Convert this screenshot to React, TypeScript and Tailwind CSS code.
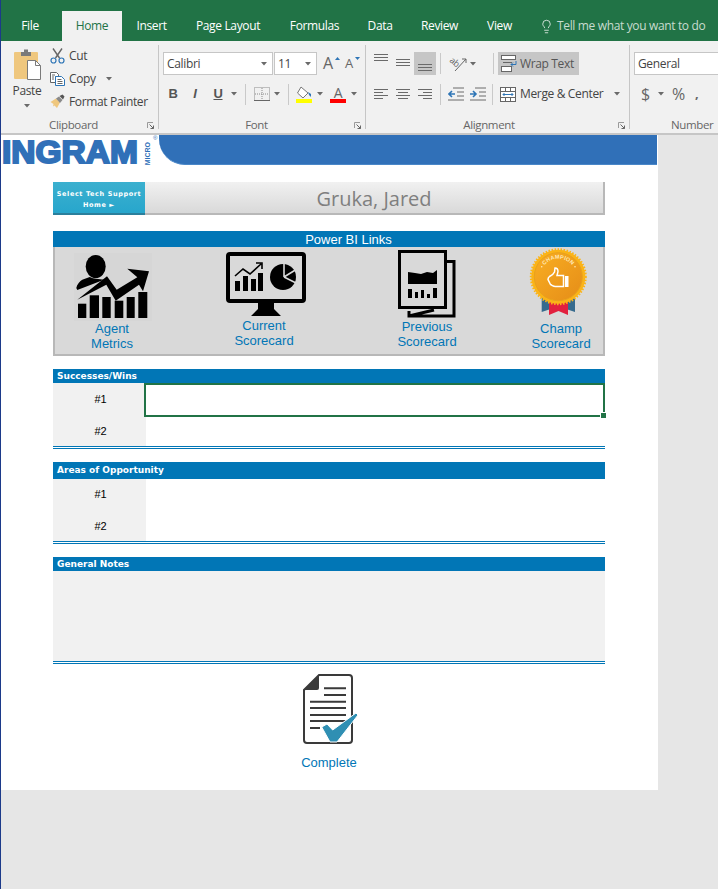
import React from "react";
import { Lightbulb } from "lucide-react";

const ui = "font-['Open_Sans',sans-serif] tracking-[-0.35px]";
const arial = "font-['Liberation_Sans',Arial,sans-serif]";

const Caret = ({ className = "" }: { className?: string }) => (
  <svg width="6" height="4" viewBox="0 0 6 4" className={`shrink-0 ${className}`}>
    <path d="M0 0h6L3 3.5z" fill="#6a6a6a" />
  </svg>
);

const Launcher = () => (
  <svg width="7" height="7" viewBox="0 0 7 7" className="shrink-0">
    <path d="M0.5 6V0.5H6" fill="none" stroke="#9a9a9a" />
    <path d="M2.5 2.5L6.5 6.5M6.5 3.5V6.5H3.5" fill="none" stroke="#666" />
  </svg>
);

const Sep = ({ className = "" }: { className?: string }) => (
  <div className={`w-px h-[21px] bg-[#c9c9c9] shrink-0 ${className}`} />
);

// horizontal lines used by the alignment buttons
const Lines = ({ rows, color = "#6a6a6a" }: { rows: number[][]; color?: string }) => (
  <svg width="14" height="22" viewBox="0 0 14 22">
    {rows.map((r, i) => (
      <rect key={i} x={r[0]} y={r[2]} width={r[1] - r[0]} height="1" fill={color} />
    ))}
  </svg>
);

const Group = ({
  label,
  width,
  children,
  labelClass = "",
}: {
  label: string;
  width: string;
  children: React.ReactNode;
  labelClass?: string;
}) => (
  <div className={`${width} h-[84px] mt-1 flex flex-col border-r border-[#c6c6c6] shrink-0`}>
    <div className="h-[75px]">{children}</div>
    <div className="h-[9px] flex items-center">
      <div className={`flex-1 text-center text-[11.5px] leading-3 text-[#666] ${labelClass}`}>{label}</div>
      <div className="mr-1 mt-px">
        <Launcher />
      </div>
    </div>
  </div>
);

const tabs = [
  { t: "File", w: "w-[50px] ml-[5px]" },
  { t: "Home", w: "w-[60px] ml-[7px]" },
  { t: "Insert", w: "w-[59px]" },
  { t: "Page Layout", w: "w-[94px]" },
  { t: "Formulas", w: "w-[79px]" },
  { t: "Data", w: "w-[52px]" },
  { t: "Review", w: "w-[67px]" },
  { t: "View", w: "w-[53px]" },
];

const TitleBar = () => (
  <div className={`h-[41px] bg-[#217346] pt-[11px] flex text-[12px] ${ui}`}>
    {tabs.map((x) => (
      <div
        key={x.t}
        className={`${x.w} h-[30px] leading-[30px] text-center ${
          x.t === "Home" ? "bg-[#f1f1f1] text-[#217346]" : "text-white"
        }`}
      >
        {x.t}
      </div>
    ))}
    <div className="ml-[13px] flex items-center h-[30px] text-[#c8dccf]">
      <Lightbulb size={15} strokeWidth={1.2} className="text-white" />
      <span className="ml-[3px] whitespace-nowrap">Tell me what you want to do</span>
    </div>
  </div>
);

const Clipboard = () => (
  <Group label="Clipboard" width="w-[159px]">
    <div className="flex">
      <div className="ml-[12px] w-[30px] flex flex-col items-center pt-1">
        <svg width="30" height="32" viewBox="0 0 30 32">
          <rect x="2" y="3" width="24" height="27" rx="1" fill="#efc77e" />
          <path d="M9 3h3V0.5h4V3h3v4H9z" fill="#7a7a7a" />
          <path d="M15.5 11.5h8l5 5v14h-13z" fill="#fff" stroke="#7a7a7a" />
          <path d="M23.5 11.5v5h5" fill="none" stroke="#7a7a7a" />
        </svg>
        <div className="mt-[2px] text-[12px] leading-[16px] text-[#444]">Paste</div>
        <Caret className="mt-[5px]" />
      </div>
      <div className="ml-[8px] -mt-px flex flex-col text-[12px] text-[#444]">
        <div className="h-[23px] flex items-center">
          <svg width="15" height="16" viewBox="0 0 15 16">
            <path d="M3 0.5L9.5 10M12 0.5L5.5 10" stroke="#666" strokeWidth="1.4" fill="none" />
            <circle cx="3.5" cy="12.5" r="2.5" fill="none" stroke="#2e75b6" strokeWidth="1.2" />
            <circle cx="11.5" cy="12.5" r="2.5" fill="none" stroke="#2e75b6" strokeWidth="1.2" />
          </svg>
          <span className="ml-[4px]">Cut</span>
        </div>
        <div className="h-[23px] flex items-center">
          <svg width="15" height="14" viewBox="0 0 15 14">
            <path d="M0.5 0.5h6l2 2v2H5.5v6h-5z" fill="#fff" stroke="#666" />
            <path d="M5.5 4.5h6l3 3v6h-9z" fill="#fff" stroke="#2e75b6" />
            <path d="M7.5 7.5h4M7.5 9.5h5M7.5 11.5h5M2 3h3M2 5h2M2 7h2" stroke="#666" />
          </svg>
          <span className="ml-[4px]">Copy</span>
          <Caret className="ml-[10px]" />
        </div>
        <div className="h-[23px] flex items-center">
          <svg width="15" height="15" viewBox="0 0 15 15">
            <path d="M0.5 8L6 4.5l4 4L7 14 4.5 11.5 3 12.5 3.5 10z" fill="#efc77e" />
            <path d="M6 4.5l3-2 3.5 3.5-2.5 3z" fill="#8a8a8a" />
            <path d="M9.5 2l3-1.5 2 2-1.5 3z" fill="#555" />
          </svg>
          <span className="ml-[4px] whitespace-nowrap">Format Painter</span>
        </div>
      </div>
    </div>
  </Group>
);

const FontGroup = () => (
  <Group label="Font" width="w-[207px]">
    <div className="pt-[7px] pl-1">
      <div className="flex items-center h-[23px]">
        <div className="w-[110px] h-[23px] bg-white border border-[#c6c6c6] flex items-center justify-between pl-[3px] pr-[5px] text-[12px] text-[#444]">
          Calibri
          <Caret />
        </div>
        <div className="ml-px w-[43px] h-[23px] bg-white border border-[#c6c6c6] flex items-center justify-between pl-[3px] pr-[5px] text-[12px] text-[#444]">
          11
          <Caret />
        </div>
        <div className="ml-[6px] w-[12px] text-[16px] leading-[23px] text-[#666]">A</div>
        <svg width="5" height="3" viewBox="0 0 5 3" className="-mt-[10px]">
          <path d="M0 3L2.5 0 5 3z" fill="#2e75b6" />
        </svg>
        <div className="ml-[5px] w-[10px] text-[13px] leading-[23px] text-[#666]">A</div>
        <svg width="5" height="3" viewBox="0 0 5 3" className="-mt-[10px]">
          <path d="M0 0h5L2.5 3z" fill="#2e75b6" />
        </svg>
      </div>
      <div className="mt-2 flex items-center h-[22px] text-[#555]">
        <div className={`w-5 text-center text-[13px] font-bold ${arial}`}>B</div>
        <div className={`ml-[2px] w-5 text-center text-[13px] italic font-bold ${arial}`}>I</div>
        <div className={`ml-[3px] w-5 text-center text-[13px] font-bold underline ${arial}`}>U</div>
        <Caret className="ml-[3px]" />
        <Sep className="ml-[8px]" />
        <svg width="16" height="14" viewBox="0 0 16 14" className="ml-[8px]">
          <rect x="0.5" y="0.5" width="15" height="13" fill="none" stroke="#8a8a8a" strokeDasharray="1 1" />
          <path d="M8 1v12M1 7h14" stroke="#8a8a8a" strokeDasharray="1 1" />
          <path d="M0 13.5h16" stroke="#666" />
        </svg>
        <Caret className="ml-[4px]" />
        <Sep className="ml-[8px]" />
        <svg width="16" height="17" viewBox="0 0 16 17" className="ml-[7px]">
          <path d="M5 1L12 7 7 12 1.5 7z" fill="#fff" stroke="#777" />
          <path d="M12 6l3 2v3l-2-2z" fill="#2e75b6" />
          <rect x="0" y="13" width="16" height="4" fill="#ffff00" />
        </svg>
        <Caret className="ml-[5px]" />
        <div className="ml-[7px] w-4 flex flex-col items-center">
          <span className="text-[14px] leading-[13px] text-[#666]">A</span>
          <div className="w-4 h-[4px] bg-[#ff0000]" />
        </div>
        <Caret className="ml-[5px]" />
      </div>
    </div>
  </Group>
);

const Alignment = () => (
  <Group label="Alignment" width="w-[264px]" labelClass="pr-[6px]">
    <div className="pt-[7px] pl-1">
      <div className="flex items-center h-[23px]">
        <div className="w-[22px] h-[23px] flex justify-center">
          <Lines rows={[[0, 14, 2], [0, 14, 5], [0, 14, 8]]} />
        </div>
        <div className="w-[22px] h-[23px] flex justify-center">
          <Lines rows={[[0, 14, 7], [0, 14, 10], [0, 14, 13]]} />
        </div>
        <div className="w-[22px] h-[23px] flex justify-center bg-[#c6c6c6]">
          <Lines rows={[[0, 14, 12], [0, 14, 15], [0, 14, 18]]} />
        </div>
        <Sep className="ml-[4px]" />
        <svg width="20" height="18" viewBox="0 0 20 18" className="ml-[7px]">
          <text x="1" y="10" fontSize="9" fill="#666" fontFamily="Open Sans" transform="rotate(40 6 8)">
            ab
          </text>
          <path d="M7 16L18 4M18 4h-4M18 4v4" stroke="#666" fill="none" />
        </svg>
        <Caret className="ml-[2px]" />
        <Sep className="ml-[17px]" />
        <div className="ml-[4px] w-[81px] h-[23px] bg-[#c6c6c6] flex items-center pl-[3px] text-[12px] text-[#555]">
          <svg width="16" height="17" viewBox="0 0 16 17" className="shrink-0">
            <rect x="0.5" y="0.5" width="14" height="4" fill="#fff" stroke="#666" />
            <rect x="0.5" y="11.5" width="10" height="5" fill="#fff" stroke="#666" />
            <path d="M2 7.5h9" stroke="#666" />
            <path d="M15 6v3.5H10M12 7.5l-2 2 2 2" stroke="#2e75b6" fill="none" />
          </svg>
          <span className="ml-[3px] whitespace-nowrap">Wrap Text</span>
        </div>
      </div>
      <div className="mt-2 flex items-center h-[22px]">
        <div className="w-[22px] flex justify-center">
          <Lines rows={[[0, 14, 6], [0, 9, 9], [0, 14, 12], [0, 9, 15]]} />
        </div>
        <div className="w-[22px] flex justify-center">
          <Lines rows={[[0, 14, 6], [2, 12, 9], [0, 14, 12], [2, 12, 15]]} />
        </div>
        <div className="w-[22px] flex justify-center">
          <Lines rows={[[0, 14, 6], [5, 14, 9], [0, 14, 12], [5, 14, 15]]} />
        </div>
        <Sep className="ml-[4px]" />
        <svg width="16" height="14" viewBox="0 0 16 14" className="ml-[7px]">
          <path d="M5 1h11M9 5h7M9 9h7M0 13h16" stroke="#6a6a6a" />
          <path d="M7 7H1M4 4L1 7l3 3" stroke="#2e75b6" strokeWidth="1.6" fill="none" />
        </svg>
        <svg width="16" height="14" viewBox="0 0 16 14" className="ml-[6px]">
          <path d="M5 1h11M9 5h7M9 9h7M0 13h16" stroke="#6a6a6a" />
          <path d="M0 7h6M3 4l3 3-3 3" stroke="#2e75b6" strokeWidth="1.6" fill="none" />
        </svg>
        <Sep className="ml-[6px]" />
        <svg width="16" height="15" viewBox="0 0 16 15" className="ml-[7px] shrink-0">
          <rect x="0.5" y="0.5" width="15" height="14" fill="#fff" stroke="#666" />
          <path d="M0 4.5h16M0 10.5h16M5.5 0v4M10.5 0v4M5.5 11v4M10.5 11v4" stroke="#666" />
          <path d="M3 7.5h10M4.5 6L3 7.5 4.5 9M11.5 6L13 7.5 11.5 9" stroke="#2e75b6" fill="none" />
        </svg>
        <span className="ml-[4px] w-[94px] whitespace-nowrap text-[12px] text-[#444]">Merge &amp; Center</span>
        <Caret />
      </div>
    </div>
  </Group>
);

const NumberGroup = () => (
  <div className="flex-1 h-[84px] mt-1 flex flex-col">
    <div className="h-[75px] pt-[7px] pl-1">
      <div className="w-[84px] h-[23px] bg-white border border-r-0 border-[#c6c6c6] pl-[3px] text-[12px] leading-[21px] text-[#444]">
        General
      </div>
      <div className="mt-2 flex items-center h-[22px] text-[#666]">
        <span className="ml-[7px] w-[10px] text-[16px]">$</span>
        <Caret className="ml-[7px]" />
        <span className="ml-[8px] text-[16px]">%</span>
        <span className="ml-[10px] text-[13px] font-bold">,</span>
      </div>
    </div>
    <div className="h-[9px] flex items-center text-[11.5px] leading-3 text-[#666] pl-[41px]">Number</div>
  </div>
);

const Ribbon = () => (
  <div className={`h-[94px] bg-[#f1f1f1] border-b-2 border-[#c6c6c6] flex ${ui}`}>
    <Clipboard />
    <FontGroup />
    <Alignment />
    <NumberGroup />
  </div>
);

const Logo = () => (
  <div className="h-[30px] flex">
    <div className={`w-[159px] h-[30px] flex items-end shrink-0 text-[#3070b8] ${arial}`}>
      <div className="w-[144px] pl-[2px]">
        <div className="origin-left scale-x-[1.08] text-[31px] leading-[24px] font-bold [-webkit-text-stroke:2px_#3070b8]">
          INGRAM
        </div>
      </div>
      <div className="[writing-mode:vertical-rl] rotate-180 text-[7px] leading-[7px] font-bold">MICRO</div>
      <div className="ml-[2px] self-start text-[6px] leading-[6px]">®</div>
    </div>
    <div className="w-[498px] h-[30px] bg-[#3070b8] rounded-bl-[26px] border-b border-[#4a87c8]" />
  </div>
);

const AgentIcon = () => (
  <svg width="78" height="68" viewBox="0 0 78 68" className="ml-[2px] bg-[#d6d6d6]">
    <ellipse cx="21.7" cy="13.5" rx="10" ry="11.5" />
    <path d="M2.3 35C3 31 6 28 8.3 26.7L15.7 24c4 2 9 2 14.3 2.7L3.3 37z" />
    <path d="M3.3 46.7L33 23.3l9.7 13.4 20.6-12.4-10-8.6L75 18.3 69 38.3l-4-6.6-23.3 16-9.4-16z" />
    <rect x="4" y="50.7" width="8.3" height="14.3" />
    <rect x="15.7" y="42.3" width="9.3" height="22.7" />
    <rect x="28.3" y="44" width="8.4" height="21" />
    <rect x="40.7" y="47.7" width="8.6" height="17.3" />
    <rect x="52.7" y="44" width="8" height="21" />
    <rect x="64.3" y="39" width="9" height="26" />
  </svg>
);

const MonitorIcon = () => (
  <svg width="80" height="66" viewBox="0 0 80 66" className="ml-[4px]">
    <rect x="2" y="2" width="76" height="47" rx="2" fill="none" stroke="#000" strokeWidth="4" />
    <path d="M32 51h16v6l7 7H25l7-7z" />
    <path d="M9 24l8-7 7 5 11-10M30 11h6v6" fill="none" stroke="#000" strokeWidth="1.6" />
    <rect x="9" y="29" width="5" height="10" />
    <rect x="17" y="24" width="5" height="15" />
    <rect x="25" y="27" width="5" height="12" />
    <rect x="32" y="21" width="5" height="18" />
    <circle cx="57" cy="25" r="13" />
    <path d="M58 25V11M58 25l13-8M58 25l12 6" stroke="#d9d9d9" strokeWidth="1.6" />
  </svg>
);

const PreviousIcon = () => (
  <svg width="59" height="68" viewBox="0 0 59 68">
    <rect x="1.5" y="1.5" width="46" height="56" fill="none" stroke="#000" strokeWidth="3" />
    <path d="M48 11.5h8V66H11v-5M11 66l25-6" fill="none" stroke="#000" strokeWidth="3" />
    <path d="M10 22l7 1 6 1 6-2 6 1 4-3v14H10z" />
    <rect x="10" y="39" width="4" height="9" />
    <rect x="17" y="42" width="3" height="6" />
    <rect x="23" y="40" width="3" height="8" />
    <rect x="29" y="44" width="3" height="4" />
    <rect x="35" y="38" width="4" height="10" />
  </svg>
);

const BadgeIcon = () => (
  <svg width="60" height="70" viewBox="0 0 60 70" className="-ml-[6px]">
    <defs>
      <linearGradient id="badge-inner" x1="0" y1="0" x2="1" y2="1">
        <stop offset="0" stopColor="#f9ae22" />
        <stop offset="1" stopColor="#e58d18" />
      </linearGradient>
    </defs>
    <path d="M13.7 50v15l9-3V50z" fill="#376b8e" />
    <path d="M47 50v15l-9-3V50z" fill="#376b8e" />
    <path d="M21 52v16l9.5-4 9.5 4V52z" fill="#e2213f" />
    <circle cx="30.3" cy="29.7" r="27" fill="#fbb418" stroke="#fbb418" strokeWidth="3" strokeDasharray="1.5 1.5" />
    <circle cx="30.3" cy="29.7" r="24" fill="url(#badge-inner)" stroke="#e8a11e" />
    <path id="badge-arc" d="M12.3 29.7a18 18 0 0 1 36 0" fill="none" />
    <text fontSize="5.5" fontWeight="700" fill="#ffe9b8" fontFamily="Liberation Sans" letterSpacing="0.2" textAnchor="middle">
      <textPath href="#badge-arc" startOffset="50%">
        CHAMPION
      </textPath>
    </text>
    <circle cx="13.7" cy="19.7" r="0.8" fill="#ffe9b8" />
    <circle cx="47" cy="19.7" r="0.8" fill="#ffe9b8" />
    <path
      d="M27 21c2 0 3 1.5 3 3.5l-1 4h6.5v11h-8c-2 0-3-1-5-2l-2.5-5c0-1 0-2 1.5-3 2-1 4-2 5-4.5z"
      fill="none"
      stroke="#fff"
      strokeWidth="1.5"
    />
    <rect x="37" y="29" width="3.5" height="11" fill="#fff" />
  </svg>
);

const links = [
  { a: "Agent", b: "Metrics", w: "w-[114px]", pt: "pt-[6px]", gap: "mt-0", icon: <AgentIcon /> },
  { a: "Current", b: "Scorecard", w: "w-[190px]", pt: "pt-[5px]", gap: "mt-0", icon: <MonitorIcon /> },
  { a: "Previous", b: "Scorecard", w: "w-[136px]", pt: "pt-[3px]", gap: "mt-px", icon: <PreviousIcon /> },
  { a: "Champ", b: "Scorecard", w: "w-[84px] ml-[24px]", pt: "pt-0", gap: "mt-1", icon: <BadgeIcon /> },
];

const SelectBar = () => (
  <div className="flex h-[33px]">
    <div className="w-[92px] pt-[4px] bg-gradient-to-b from-[#3bb0cf] to-[#27a6cc] border-b-2 border-[#2b7f9c] flex flex-col items-center justify-center text-white text-[6.5px] leading-[11px] font-bold tracking-[0.6px] font-['DejaVu_Sans',sans-serif]">
      <div>Select Tech Support</div>
      <div>Home ►</div>
    </div>
    <div className="flex-1 pt-[2px] bg-gradient-to-b from-[#f1f1f1] to-[#d9d9d9] border-r-2 border-b-2 border-[#b8b8b8] flex items-center justify-center text-[20px] text-[#7f7f7f] font-['Open_Sans',sans-serif]">
      Gruka, Jared
    </div>
  </div>
);

const PowerBI = () => (
  <div className="mt-[16px]">
    <div className={`h-4 pl-[39px] bg-[#0176b6] text-white text-center text-[13px] leading-[18px] ${arial}`}>
      Power BI Links
    </div>
    <div className={`h-[109px] bg-[#d9d9d9] border-x-2 border-b-2 border-[#b8b8b8] flex ${arial}`}>
      {links.map((l) => (
        <div key={l.a} className={`${l.w} ${l.pt} flex flex-col items-center shrink-0`}>
          {l.icon}
          <div className={`${l.gap} text-[13px] leading-[15px] text-[#0176b6] text-center`}>
            <div>{l.a}</div>
            <div>{l.b}</div>
          </div>
        </div>
      ))}
    </div>
  </div>
);

const SectionHead = ({ title, h }: { title: string; h: string }) => (
  <div className={`${h} pt-px bg-[#0176b6] text-white text-[9px] font-bold pl-1 flex items-center font-['DejaVu_Sans',sans-serif]`}>
    {title}
  </div>
);

const DoubleLine = () => <div className="h-[3px] border-y border-[#0176b6]" />;

const NumRow = ({ n, h, selected, cls = "" }: { n: string; h: string; selected?: boolean; cls?: string }) => (
  <div className={`flex ${h}`}>
    <div className={`w-[93px] pl-[2px] bg-[#f1f1f1] flex items-center justify-center text-[11px] text-black ${cls} ${arial}`}>
      {n}
    </div>
    {selected ? (
      <div className="flex-1 -ml-[2px] relative border-2 border-[#217346] bg-white">
        <div className="absolute -right-[3px] -bottom-[3px] w-[5px] h-[5px] bg-[#217346] border border-white box-content -m-px" />
      </div>
    ) : (
      <div className="flex-1 bg-white" />
    )}
  </div>
);

const CompleteIcon = () => (
  <svg width="70" height="73" viewBox="0 0 70 73" className="mx-auto">
    <path d="M25 3h30a3 3 0 0 1 3 3v62a3 3 0 0 1-3 3H13a3 3 0 0 1-3-3V18z" fill="#fff" stroke="#3a3a3a" strokeWidth="2" />
    <path d="M25 3v13a2 2 0 0 1-2 2H10z" fill="#3a3a3a" />
    <path d="M30 16.3h22M30 23h22M16 29.7h36M16 36h36M16 43h36M16 49h36M16 56h10" stroke="#3a3a3a" strokeWidth="2" />
    <path d="M27.7 55L33 52l5.7 6L62 41l2 2-21 27h-7z" fill="#2f8fb3" stroke="#fff" strokeWidth="1" />
  </svg>
);

const Sheet = () => (
  <div className="w-[658px] h-[655px] bg-white">
    <Logo />
    <div className="pt-[17px] pl-[53px] w-[605px]">
      <SelectBar />
      <PowerBI />
      <div className="mt-[13px]">
        <SectionHead title="Successes/Wins" h="h-[14px]" />
        <NumRow n="#1" h="h-[34px]" cls="pb-[2px]" selected />
        <NumRow n="#2" h="h-[29px]" />
        <DoubleLine />
      </div>
      <div className="mt-[13px]">
        <SectionHead title="Areas of Opportunity" h="h-[17px]" />
        <NumRow n="#1" h="h-[31px]" />
        <NumRow n="#2" h="h-[31px]" cls="pt-[2px]" />
        <DoubleLine />
      </div>
      <div className="mt-[13px]">
        <SectionHead title="General Notes" h="h-[14px]" />
        <div className="h-[90px] bg-[#f1f1f1]" />
        <DoubleLine />
      </div>
      <div className="mt-[8px] text-center">
        <CompleteIcon />
        <div className={`mt-[10px] text-[13px] leading-4 text-[#0176b6] ${arial}`}>Complete</div>
      </div>
    </div>
  </div>
);

export default function App() {
  return (
    <div className="relative w-[718px] h-[889px] bg-[#e6e6e6] overflow-hidden">
      <TitleBar />
      <Ribbon />
      <Sheet />
      <div className="absolute left-0 top-0 w-px h-full bg-[#1c3a8a]" />
    </div>
  );
}
